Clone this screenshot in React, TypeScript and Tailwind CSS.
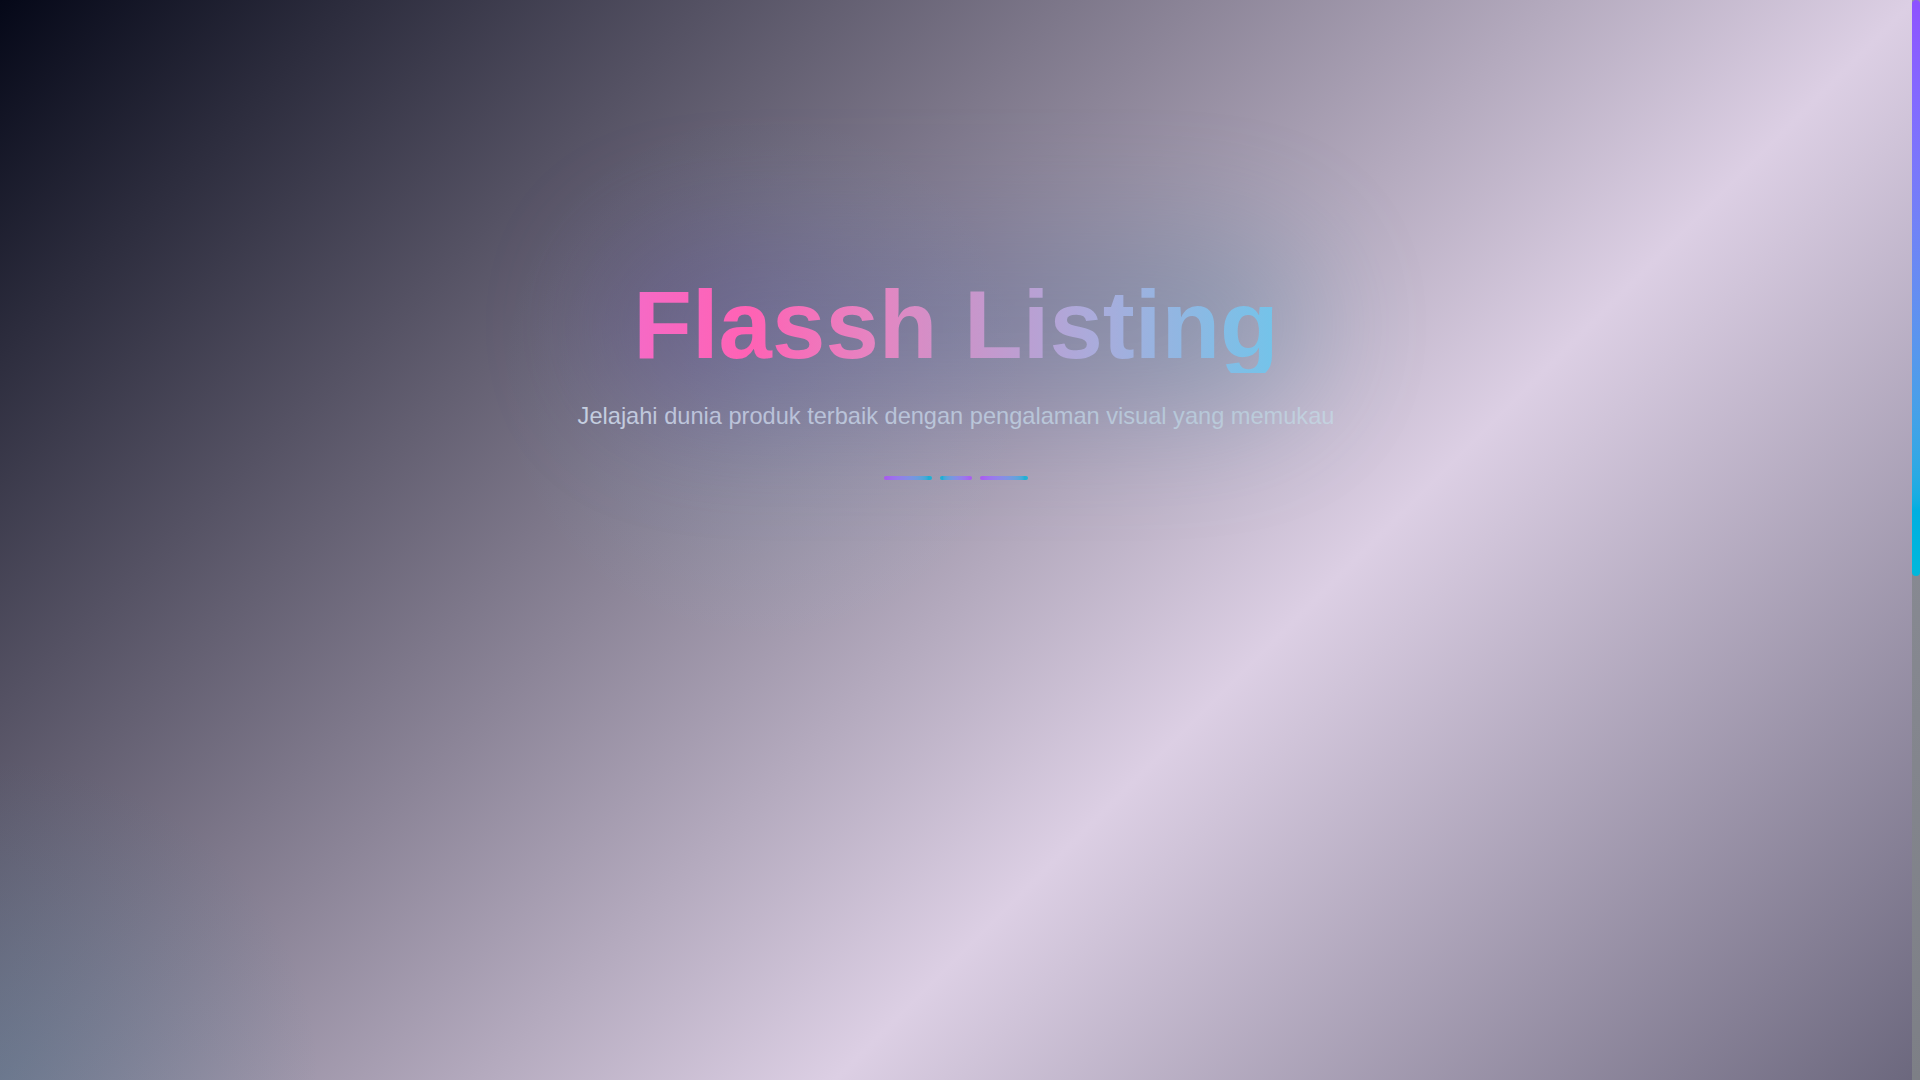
export default function App() {
  return (
    <div className="flex h-screen overflow-hidden font-['Liberation_Sans',Arial,sans-serif]">
      <main className="flex-1 bg-[#6c687e] bg-no-repeat bg-[radial-gradient(circle_at_0%_100%,rgba(60,120,150,0.28),transparent_320px),radial-gradient(circle_at_40%_35%,rgba(120,219,255,0.08),transparent_270px),linear-gradient(135deg,#050818_0%,#dccfe4_64%,#6c687e_100%)]">
        <section className="flex flex-col items-center pt-[277px] text-center">
          <div className="relative">
            {/* glow behind the title */}
            <div className="absolute -inset-x-8 -inset-y-10 rounded-full bg-linear-to-r from-[#4c1d95] to-[#0e7490] opacity-25 blur-3xl" />
            <h1 className="relative text-8xl leading-none font-bold bg-[linear-gradient(90deg,#f56ac6_0%,#ff62b4_18%,#e486c2_38%,#cc93c9_50%,#a9acdc_72%,#72c4ea_100%)] bg-clip-text text-transparent">
              Flassh Listing
            </h1>
          </div>
          <p className="mt-6 text-[23.6px] leading-[39px] text-slate-300">
            Jelajahi dunia produk terbaik dengan pengalaman visual yang memukau
          </p>
          <div className="mt-10 flex gap-2">
            <span className="h-1 w-12 rounded-full bg-linear-to-r from-purple-500 to-cyan-500 opacity-80" />
            <span className="h-1 w-8 rounded-full bg-linear-to-r from-cyan-500 to-purple-500 opacity-80" />
            <span className="h-1 w-12 rounded-full bg-linear-to-r from-purple-500 to-cyan-500 opacity-80" />
          </div>
        </section>
      </main>

      {/* page scrollbar */}
      <div className="w-2 shrink-0 bg-linear-to-b from-[#92949e] to-[#7d7f86]">
        <div className="h-[576px] rounded-full bg-linear-to-b from-violet-500 to-cyan-500" />
      </div>
    </div>
  )
}
